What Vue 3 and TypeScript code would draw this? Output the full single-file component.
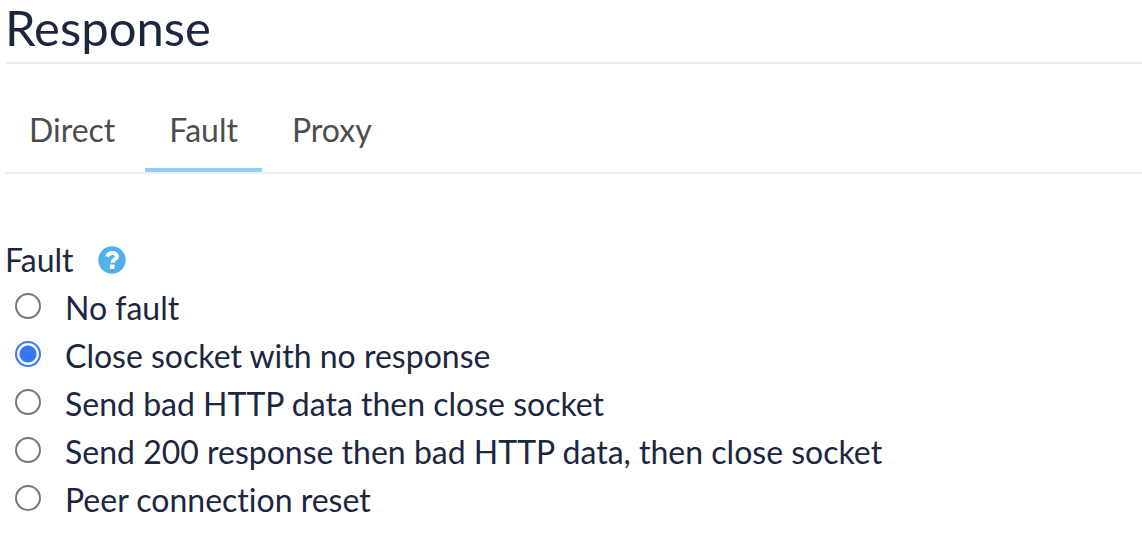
<script setup lang="ts">
import { ref } from 'vue'

const tabs = ['Direct', 'Fault', 'Proxy']
const activeTab = ref('Fault')

const faults = [
  { id: 'none', label: 'No fault' },
  { id: 'close', label: 'Close socket with no response' },
  { id: 'bad', label: 'Send bad HTTP data then close socket' },
  { id: 'ok-bad', label: 'Send 200 response then bad HTTP data, then close socket' },
  { id: 'reset', label: 'Peer connection reset' },
]
const selected = ref('close')
</script>

<template>
  <main class="response">
    <h1 class="title">Response</h1>
    <nav class="tabs" role="tablist" aria-label="Response type">
      <button
        v-for="tab in tabs"
        :key="tab"
        type="button"
        role="tab"
        class="tab"
        :class="{ active: tab === activeTab }"
        :aria-selected="tab === activeTab"
        @click="activeTab = tab"
      >{{ tab }}</button>
    </nav>
    <fieldset class="faults">
      <legend class="legend">
        <span>Fault</span>
        <button type="button" class="help" aria-label="Help">
          <svg viewBox="0 0 28 28" width="28" height="28" aria-hidden="true">
            <circle cx="14" cy="14" r="13.7" fill="#52b0ea" />
            <path d="M9.1 10.6C10 8.1 11.8 6.9 14.2 6.9c2.7 0 4.7 1.4 4.7 3.5 0 3.2-4.6 2.8-4.6 6.3" fill="none" stroke="#fff" stroke-width="4" />
            <rect x="11.9" y="18.4" width="4.7" height="4.5" rx="0.8" fill="#fff" />
          </svg>
        </button>
      </legend>
      <label v-for="fault in faults" :key="fault.id" class="option">
        <input v-model="selected" type="radio" name="fault" class="radio" :value="fault.id" />
        <span>{{ fault.label }}</span>
      </label>
    </fieldset>
  </main>
</template>

<style>
body {
  margin: 0;
  background: #fff;
}
</style>

<style scoped>
.response {
  padding-left: 5px;
  color: #1b263f;
  font-family: Lato, "Liberation Sans", sans-serif;
  font-size: 32px;
  font-variant-ligatures: none;
  line-height: 48px;
}
.title {
  margin: 0;
  padding-bottom: 8px;
  border-bottom: 2px solid #ededed;
  font-size: 49px;
  font-weight: 400;
  line-height: 54px;
}
.tabs {
  display: flex;
  gap: 6px;
  padding-top: 36px;
  border-bottom: 2px solid #ededed;
}
.tab {
  box-sizing: border-box;
  height: 72px;
  padding: 0 24px 8px;
  border: 0;
  border-bottom: 4px solid transparent;
  background: none;
  color: #4d4d4d;
  font: inherit;
  cursor: pointer;
}
.tab.active {
  border-bottom-color: #95cdf1;
}
.faults {
  margin: 62px 0 0;
  padding: 0;
  border: 0;
}
.legend {
  display: flex;
  align-items: center;
  gap: 24px;
  padding: 0;
}
.help {
  display: flex;
  padding: 0;
  border: 0;
  background: none;
  cursor: pointer;
}
.option {
  display: flex;
  align-items: center;
  gap: 24px;
  padding-left: 10px;
}
.radio {
  appearance: none;
  box-sizing: border-box;
  flex: none;
  width: 26px;
  height: 26px;
  margin: 0 0 4px;
  border: 2px solid #767676;
  border-radius: 50%;
  background: #fff;
}
.radio:checked {
  border-color: #3478f6;
  background: radial-gradient(circle, #3478f6 8px, #fff 9px);
}
</style>
